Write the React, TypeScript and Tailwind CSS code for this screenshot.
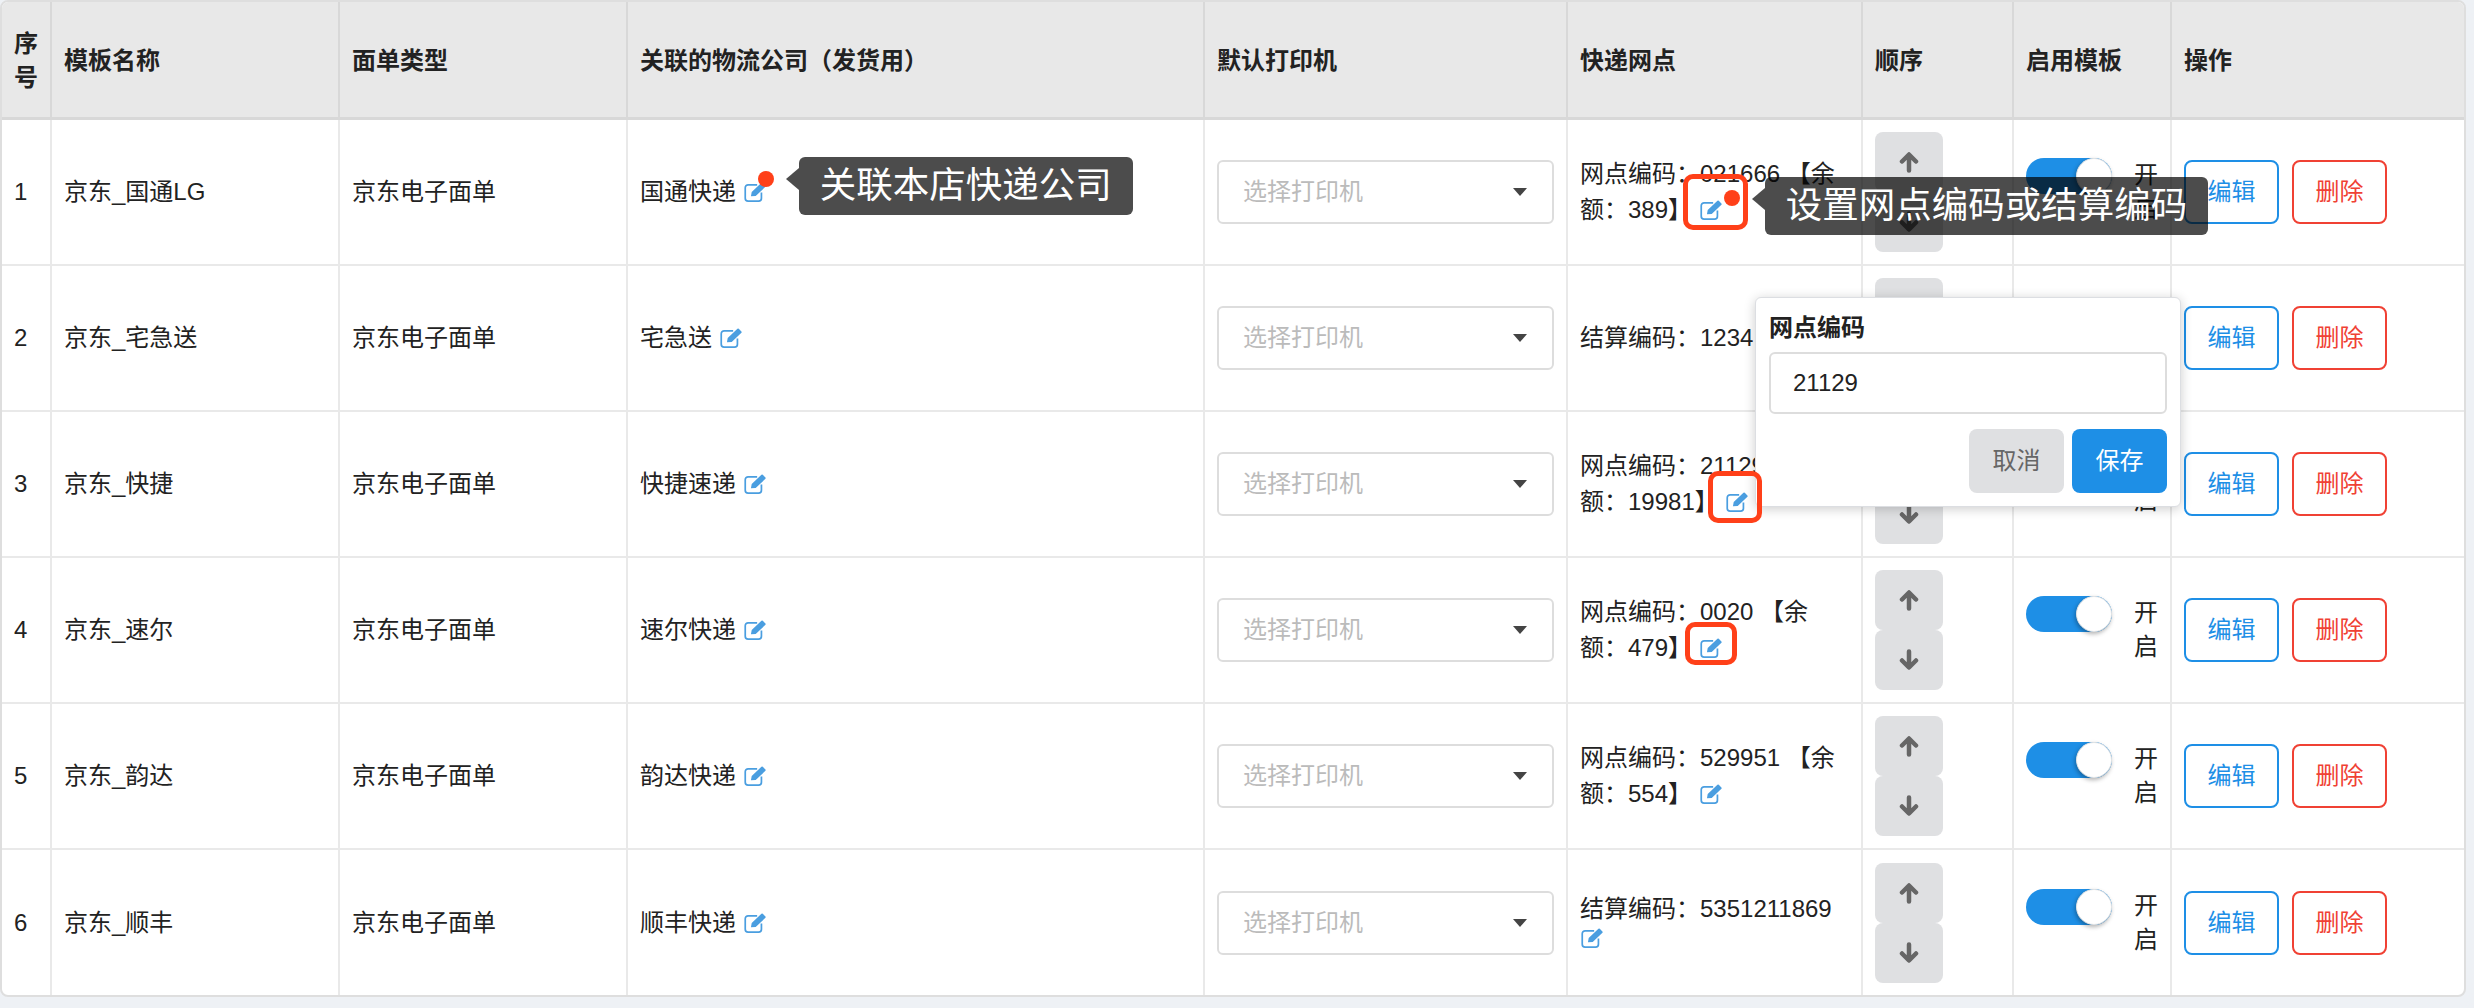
import React from 'react';

type Row = {
  id: number;
  name: string;
  carrier: string;
  code: string;
};

const rows: Row[] = [
  { id: 1, name: '京东_国通LG', carrier: '国通快递', code: '网点编码：021666 【余额：389】' },
  { id: 2, name: '京东_宅急送', carrier: '宅急送', code: '结算编码：1234' },
  { id: 3, name: '京东_快捷', carrier: '快捷速递', code: '网点编码：21129 【余额：19981】' },
  { id: 4, name: '京东_速尔', carrier: '速尔快递', code: '网点编码：0020 【余额：479】' },
  { id: 5, name: '京东_韵达', carrier: '韵达快递', code: '网点编码：529951 【余额：554】' },
  { id: 6, name: '京东_顺丰', carrier: '顺丰快递', code: '结算编码：5351211869' },
];

const Tip = ({ text, className }: { text: string; className: string }) => (
  <span className={`absolute z-30 flex h-[58px] items-center whitespace-nowrap rounded-md bg-black/70 px-[21px] text-[36.500px] leading-none text-white ${className}`}>
    <span className="absolute -left-[13px] top-[11px] h-0 w-0 border-y-[11px] border-r-[13px] border-y-transparent border-r-black/70" />
    {text}
  </span>
);

const Dot = ({ className }: { className: string }) => (
  <span className={`absolute z-30 h-4 w-4 rounded-full bg-[#ff4019] ${className}`} />
);

const Box = ({ className }: { className: string }) => (
  <span className={`absolute z-20 rounded-[10px] border-[5px] border-[#ff4019] ${className}`} />
);

const EditIcon = ({ children }: { children?: React.ReactNode }) => (
  <span className="relative inline-block h-[20px] w-[24px] align-[-2px]">
    <svg viewBox="0 0 23.500 21" className="block h-[20px] w-[24px] text-[#4a9ee0]">
      <path d="M14 3H4.500A3 3 0 0 0 1.500 6v11a3 3 0 0 0 3 3h11a3 3 0 0 0 3-3v-6" fill="none" stroke="currentColor" strokeWidth="1.800" />
      <path d="M7.500 15l.8-4.500L18.500.8a1 1 0 0 1 1.400 0l2.800 2.800a1 1 0 0 1 0 1.400L12.500 14.800z" fill="currentColor" />
    </svg>
    {children}
  </span>
);

const Arrow = ({ down }: { down?: boolean }) => (
  <svg viewBox="0 0 20 22" className={`h-[22px] w-[20px] text-[#666] ${down ? 'rotate-180' : ''}`}>
    <path d="M10 19.500V4M3 10.500L10 3.500l7 7" fill="none" stroke="currentColor" strokeWidth="4.500" strokeLinecap="round" strokeLinejoin="round" />
  </svg>
);

const App = () => {
  return (
    <div className="min-h-screen bg-[#eef1f5] font-['Liberation_Sans','Noto_Sans_CJK_SC',sans-serif] text-[24px] leading-[34px] text-[#222]">
      <div className="relative w-[2466px] overflow-hidden rounded-lg border-2 border-[#dedede] bg-white">
        <table className="w-full table-fixed border-separate border-spacing-0">
          <colgroup>
            <col className="w-[50px]" />
            <col className="w-[288px]" />
            <col className="w-[288px]" />
            <col className="w-[577px]" />
            <col className="w-[363px]" />
            <col className="w-[295px]" />
            <col className="w-[151px]" />
            <col className="w-[158px]" />
            <col />
          </colgroup>
          <thead>
            <tr className="h-[118px] bg-[#e8e8e8] text-left font-bold">
              {['序号', '模板名称', '面单类型', '关联的物流公司（发货用）', '默认打印机', '快递网点', '顺序', '启用模板', '操作'].map((h, i) => (
                <th key={h} className={`border-b-[3px] border-[#d8d8d8] px-3 pt-[2px] ${i < 8 ? 'border-r-2' : ''}`}>
                  {h}
                </th>
              ))}
            </tr>
          </thead>
          <tbody>
            {rows.map((r, i) => {
              const cell = `px-3 align-middle border-[#e9e9e9] ${i < 5 ? 'h-[146px] border-b-2' : 'h-[145px]'}`;
              return (
                <tr key={r.id}>
                  <td className={`${cell} border-r-2`}>{r.id}</td>
                  <td className={`${cell} border-r-2`}>{r.name}</td>
                  <td className={`${cell} border-r-2`}>京东电子面单</td>
                  <td className={`${cell} border-r-2`}>
                    {r.carrier}{' '}
                    <EditIcon>
                      {r.id === 1 && (
                        <>
                          <Dot className="-top-[11px] left-[15px]" />
                          <Tip text="关联本店快递公司" className="-top-[25px] left-[56px]" />
                        </>
                      )}
                    </EditIcon>
                  </td>
                  <td className={`${cell} border-r-2`}>
                    <div className="flex h-[64px] items-center justify-between rounded-md border-2 border-[#dddddd] bg-white pl-[24px] pr-[24px] text-[#bbbbbb]">
                      选择打印机
                      <svg width="16" height="8" viewBox="0 0 16 8" className="text-[#444]">
                        <path d="M1 0h14L8 8z" fill="currentColor" />
                      </svg>
                    </div>
                  </td>
                  <td className={`${cell} border-r-2 ${r.id === 6 ? 'leading-[29px]' : 'leading-[36px]'}`}>
                    {r.code}{' '}
                    <EditIcon>
                      {r.id === 1 && (
                        <>
                          <Box className="-left-[16px] -top-[26px] h-[56px] w-[65px]" />
                          <Dot className="left-[25px] -top-[10px]" />
                          <Tip text="设置网点编码或结算编码" className="-top-[23px] left-[66px]" />
                        </>
                      )}
                      {r.id === 3 && <Box className="-left-[17px] -top-[21px] h-[52px] w-[54px]" />}
                      {r.id === 4 && <Box className="-left-[14px] -top-[16px] h-[43px] w-[52px]" />}
                    </EditIcon>
                  </td>
                  <td className={`${cell} border-r-2`}>
                    <div className="flex w-[68px] flex-col">
                      <div className="flex h-[60px] items-center justify-center rounded-lg bg-[#dfe0e2]">
                        <Arrow />
                      </div>
                      <div className="flex h-[60px] items-center justify-center rounded-lg bg-[#dfe0e2]">
                        <Arrow down />
                      </div>
                    </div>
                  </td>
                  <td className={`${cell} border-r-2`}>
                    <div className="flex items-start justify-between">
                      <div className="flex h-[36px] w-[86px] shrink-0 justify-end rounded-full bg-[#1e8fe6]">
                        <div className="h-[36px] w-[36px] rounded-full border border-[#e4e4e4] bg-white shadow-[-1px_2px_4px_rgba(0,0,0,0.3)]" />
                      </div>
                      <span className="w-[24px]">开启</span>
                    </div>
                  </td>
                  <td className={cell}>
                    <div className="flex gap-[13px]">
                      <button className="h-[64px] w-[95px] rounded-lg border-2 border-[#1e8fe6] bg-white text-[#1e8fe6]">编辑</button>
                      <button className="h-[64px] w-[95px] rounded-lg border-2 border-[#f04134] bg-white text-[#f04134]">删除</button>
                    </div>
                  </td>
                </tr>
              );
            })}
          </tbody>
        </table>

        {/* popover opened from row 3 */}
        <div className="absolute left-[1753px] top-[295px] z-10 w-[426px] rounded-md border border-[#dcdee2] bg-white px-[13px] pb-[13px] pt-[13px] shadow-[0_2px_12px_rgba(0,0,0,0.2)]">
          <div className="mb-[7px] font-bold">网点编码</div>
          <input readOnly value="21129" className="h-[62px] w-full rounded-md border-2 border-[#dddddd] px-[22px] text-[24px] text-[#222] outline-none" />
          <div className="mt-[15px] flex justify-end gap-[8px]">
            <button className="h-[64px] w-[95px] rounded-lg bg-[#dfe0e2] text-[#666]">取消</button>
            <button className="h-[64px] w-[95px] rounded-lg bg-[#1e8fe6] text-white">保存</button>
          </div>
        </div>
      </div>
    </div>
  );
};

export default App;
